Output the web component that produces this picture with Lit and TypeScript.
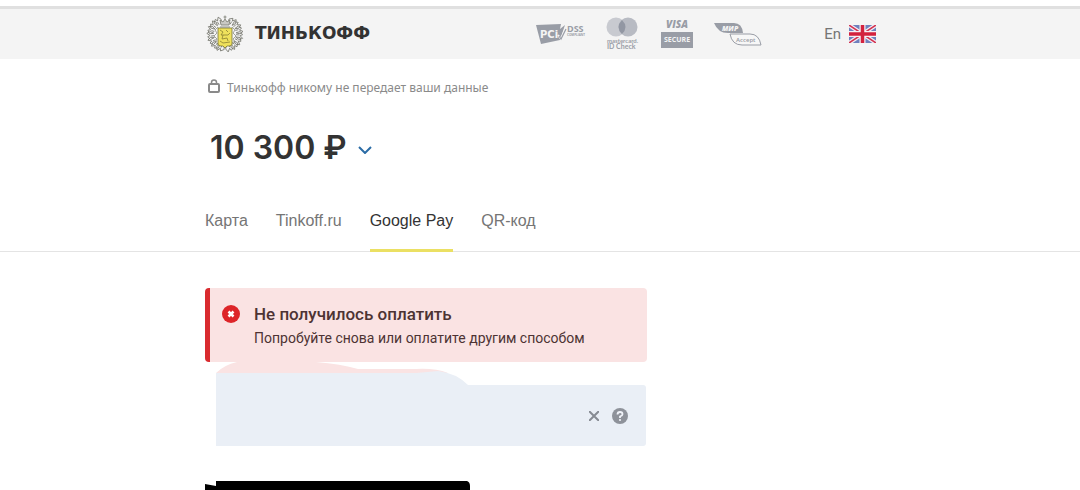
import { LitElement, html, svg, css } from "lit";
import { customElement, state } from "lit/decorators.js";

const feathers = [30, 52, 74, 96, 118, 140, 162, 198, 220, 242, 264, 286, 308, 330];

@customElement("brand-crest")
export class BrandCrest extends LitElement {
  static styles = css`
    :host { display: block; }
    svg { display: block; }
  `;
  render() {
    return html`<svg width="40" height="38" viewBox="0 0 40 38" fill="none" stroke="#77786f" stroke-width="0.8" aria-hidden="true">
      ${feathers.map(
        (a) => svg`<path transform="rotate(${a} 20 19)" d="M17.500 8L16 4L19 1.500L20 4L22.500 1L24 4.500L22 8M19.500 8V5"/>`
      )}
      <path d="M13 12L10 15L12 18L9 21L12 24L10 27L14 30M27 12L30 15L28 18L31 21L28 24L30 27L26 30" stroke="#8c8d84"/>
      <path d="M13 13H27V29Q27 31 24 31H22L20 33L18 31H16Q13 31 13 29Z" fill="#efe15c" stroke="#77733b"/>
      <path d="M15 15L18 17L16 20H23L25 18M21 15L23 17M18 20L17 24L22 23L23 26M15 26L18 28L25 27" stroke="#8a8132"/>
      <path d="M16 10L15 5L18 7L20 4L22 7L25 5L24 10Z" fill="#c9c9c5"/>
      <path d="M20 4V0.500M18.500 2H21.500M15 12H25"/>
    </svg>`;
  }
}

@customElement("security-badges")
export class SecurityBadges extends LitElement {
  static styles = css`
    :host { display: block; }
    svg { display: block; }
    text { font-family: "Open Sans", sans-serif; font-weight: 700; }
    .lit { fill: #f4f4f4; }
    .pci { font-family: "DejaVu Sans", sans-serif; }
    .round { font-family: Lato, sans-serif; }
    .slant { font-style: italic; font-weight: 800; }
    .plain { font-weight: 600; }
  `;
  render() {
    return html`<svg width="228" height="34" viewBox="0 0 228 34" fill="#999da6" role="img" aria-label="PCI DSS, Mastercard ID Check, Visa Secure, МИР Accept">
      <path d="M0 8L25 7L24 12L29 8L24 23L5 27Z"/>
      <text class="lit pci" x="4" y="21" font-size="10">PCi</text>
      <path d="M22 18L25 22L31 8" fill="none" stroke="#f4f4f4" stroke-width="2"/>
      <path d="M23 19L25 22L30 12" fill="none" stroke="#999da6" stroke-width="1.200"/>
      <text x="31" y="15" font-size="9">DSS</text>
      <text x="31" y="19" font-size="3">COMPLIANT</text>

      <circle cx="80" cy="10" r="9.500" fill="#c8cad0"/>
      <circle cx="92" cy="10" r="9.500" fill="#b8bbc3"/>
      <path d="M86 3Q79 10 86 17Q93 10 86 3Z" fill="#9297a3"/>
      <text class="round" x="71" y="26" font-size="6">mastercard.</text>
      <text class="round" x="71" y="32" font-size="7">ID Check</text>

      <text class="slant" x="130" y="11" font-size="10">VISA</text>
      <rect x="125" y="15" width="32" height="16"/>
      <text class="lit" x="128" y="25" font-size="7">SECURE</text>

      <path d="M178 6H198Q206 6 207 16H192Q182 16 178 6Z"/>
      <text class="lit slant" x="186" y="14" font-size="7">МИР</text>
      <path d="M194 17H214Q223 17 225 28H206Q196 28 194 17Z" fill="#f7f7f7" stroke="#999da6"/>
      <text class="plain" x="200" y="25" font-size="6">Accept</text>
    </svg>`;
  }
}

@customElement("app-root")
export class AppRoot extends LitElement {
  static styles = css`
    :host {
      display: block;
      min-height: 100vh;
      overflow: hidden;
      background: #fff;
      color: #333;
      font-family: "Liberation Sans", Arial, sans-serif;
      font-size: 16px;
      line-height: 24px;
    }
    * { box-sizing: border-box; }
    button { font: inherit; color: inherit; background: none; border: 0; padding: 0; cursor: pointer; }
    svg { display: block; }
    .wrap { max-width: 672px; margin: 0 auto; padding-left: 1px; }
    .header { margin-top: 6px; border-top: 3px solid #e0e0e0; background: #f4f4f4; }
    .header .wrap { display: flex; align-items: center; height: 50px; }
    .brand { display: flex; align-items: center; gap: 10px; color: #333; text-decoration: none; font: 700 17px/24px "DejaVu Sans", sans-serif; }
    .brand span { padding-bottom: 2px; }
    .badges { margin-left: auto; }
    .lang { display: flex; align-items: center; gap: 8px; margin-left: 60px; font: 15px/20px Roboto, sans-serif; color: #757575; }
    .secure { display: flex; align-items: center; gap: 7px; margin: 17px 0 0; padding-left: 3px; font: 12px/24px "Noto Sans", sans-serif; color: #8a8a8a; }
    .secure svg { margin-bottom: 4px; }
    .amount { display: flex; align-items: center; gap: 11px; margin: 28px 0 0; padding-left: 5px; font: 600 32px/40px Inter, sans-serif; color: #333; }
    .amount button { padding-top: 4px; }
    .tabs { margin-top: 40px; border-bottom: 1px solid #e4e4e4; }
    .tabs .wrap { display: flex; gap: 28px; }
    .tab { height: 44px; margin-bottom: -1px; padding-bottom: 16px; border-bottom: 3px solid transparent; color: #757575; }
    .tab.on { color: #333; border-color: #ebe063; }
    .panel { width: 442px; max-width: 100%; margin-top: 36px; }
    .alert { display: flex; gap: 14px; padding: 14px 12px 12px; border-left: 5px solid #d92b2f; border-radius: 4px; background: #fae3e3; color: #4d3333; font: 14px/24px Roboto, sans-serif; }
    .alert svg { margin-top: 3px; }
    .alert h2 { margin: 0; font: 500 17px/24px Roboto, sans-serif; }
    .alert p { margin: 0; }
    .field { position: relative; display: flex; justify-content: flex-end; align-items: center; gap: 13px; height: 61px; margin: 23px 1px 0 11px; padding-right: 18px; border-radius: 0 3px 3px 0; background: #eaeff6; }
    .smear { position: absolute; left: 0; bottom: 100%; }
    .redacted { margin-top: 35px; }
  `;

  @state() private active = "Google Pay";

  render() {
    return html`
      <header class="header"><div class="wrap">
        <a class="brand" href="#"><brand-crest></brand-crest><span>ТИНЬКОФФ</span></a>
        <security-badges class="badges"></security-badges>
        <button class="lang">En
          <svg width="27" height="18" viewBox="0 0 27 18" aria-hidden="true">
            <path fill="#7080bd" d="M0 0H27V18H0Z"/>
            <path d="M0 0L27 18M27 0L0 18" stroke="#f1eef5" stroke-width="4"/>
            <path d="M0 0L27 18M27 0L0 18" stroke="#d4324f" stroke-width="1.500"/>
            <path d="M13.500 0V18M0 9H27" stroke="#f4eff4" stroke-width="6"/>
            <path d="M13.500 0V18M0 9H27" stroke="#d3213d" stroke-width="3.500"/>
          </svg>
        </button>
      </div></header>
      <main>
        <div class="wrap">
          <p class="secure">
            <svg width="12" height="14" viewBox="0 0 12 14" fill="none" stroke="#8a8a8a" stroke-width="2" aria-hidden="true"><rect x="1" y="5" width="10" height="8" rx="1"/><path d="M3.500 5V3.500Q3.500 1 6 1T8.500 3.500V5" stroke-width="1.500"/></svg>
            Тинькофф никому не передает ваши данные
          </p>
          <h1 class="amount">10 300 ₽
            <button aria-label="Подробнее"><svg width="14" height="8" viewBox="0 0 14 8" fill="none" stroke="#2b6ca6" stroke-width="2"><path d="M1 1L7 7L13 1"/></svg></button>
          </h1>
        </div>
        <nav class="tabs"><div class="wrap">
          ${["Карта", "Tinkoff.ru", "Google Pay", "QR-код"].map(
            (t) => html`<button class="tab ${t === this.active ? "on" : ""}" @click=${() => (this.active = t)}>${t}</button>`
          )}
        </div></nav>
        <div class="wrap"><div class="panel">
          <section class="alert" role="alert">
            <svg width="18" height="18" viewBox="0 0 18 18" aria-hidden="true"><circle cx="9" cy="9" r="9" fill="#dd2529"/><path d="M6.500 6.500L11.500 11.500M11.500 6.500L6.500 11.500" stroke="#fff" stroke-width="2.500"/></svg>
            <div><h2>Не получилось оплатить</h2><p>Попробуйте снова или оплатите другим способом</p></div>
          </section>
          <div class="field">
            <svg class="smear" width="254" height="23" viewBox="0 0 254 23" aria-hidden="true">
              <path fill="#fae3e3" d="M0 11Q8 3 21 0H100Q125 2 142 7H200Q219 6 232 11Z"/>
              <path fill="#eaeff6" d="M0 11H200Q212 10 222 9Q240 11 252 23H0Z"/>
            </svg>
            <button aria-label="Очистить"><svg width="10" height="10" viewBox="0 0 10 10" stroke="#878b93" stroke-width="2"><path d="M0 0L10 10M10 0L0 10"/></svg></button>
            <button aria-label="Помощь"><svg width="16" height="16" viewBox="0 0 16 16" fill="none"><circle cx="8" cy="8" r="8" fill="#8e929a"/><path d="M5.500 6.500Q5.500 4 8 4T10.500 6.200Q10.500 7.500 8 8.500V10" stroke="#f0f3f9" stroke-width="1.800"/><circle cx="8" cy="12" r="1.100" fill="#f0f3f9"/></svg></button>
          </div>
          <svg class="redacted" width="265" height="9" viewBox="0 0 265 9" aria-hidden="true"><path d="M0 3L11 5V0H262Q265 1 265 5V9H0Z"/></svg>
        </div></div>
      </main>
    `;
  }
}
